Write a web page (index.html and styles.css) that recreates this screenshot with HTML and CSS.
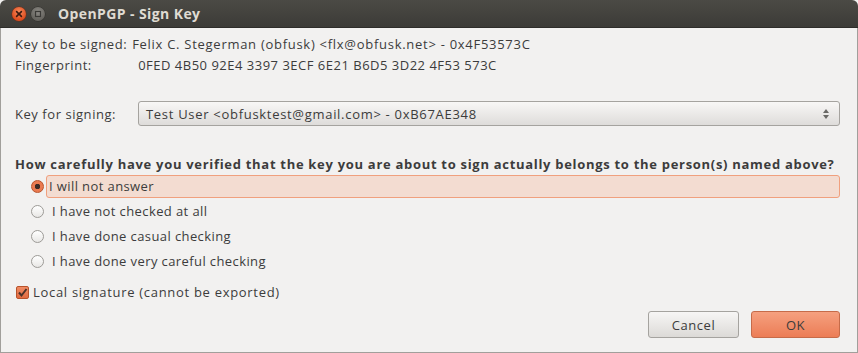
FILE: index.html
```html
<!DOCTYPE html>
<html>
<head>
<meta charset="utf-8">
<link rel="stylesheet" href="styles.css">
</head>
<body>
<div class="window">
  <div class="titlebar">
    <span class="wbtn close"><svg width="14" height="14" viewBox="0 0 14 14"><path d="M4.6 4.6 L9.4 9.4 M9.4 4.6 L4.6 9.4" stroke="#3b1a10" stroke-width="1.6" stroke-linecap="round"/></svg></span>
    <span class="wbtn max"><svg width="14" height="14" viewBox="0 0 14 14"><rect x="4.5" y="4.5" width="5" height="5" fill="none" stroke="#3a3936" stroke-width="1.2"/></svg></span>
    <span class="title">OpenPGP - Sign Key</span>
  </div>
  <div class="content">
    <div class="info">
      <span class="lbl">Key to be signed:</span><span class="val">Felix C. Stegerman (obfusk) &lt;flx@obfusk.net&gt; - 0x4F53573C</span>
      <span class="lbl">Fingerprint:</span><span class="val fp">0FED 4B50 92E4 3397 3ECF 6E21 B6D5 3D22 4F53 573C</span>
    </div>
    <div class="signrow">
      <span class="signlbl">Key for signing:</span>
      <div class="combo">
        <span class="combotext">Test User &lt;obfusktest@gmail.com&gt; - 0xB67AE348</span>
        <svg class="arrows" width="8" height="14" viewBox="0 0 8 14"><path d="M4 2 L7 6 L1 6 Z M4 12 L7 8 L1 8 Z" fill="#6a6966"/></svg>
      </div>
    </div>
    <div class="question">How carefully have you verified that the key you are about to sign actually belongs to the person(s) named above?</div>
    <div class="options">
      <div class="opt selected"><span class="radio on"></span><span class="optlbl">I will not answer</span></div>
      <div class="opt"><span class="radio"></span><span class="optlbl">I have not checked at all</span></div>
      <div class="opt"><span class="radio"></span><span class="optlbl">I have done casual checking</span></div>
      <div class="opt"><span class="radio"></span><span class="optlbl">I have done very careful checking</span></div>
    </div>
    <div class="check">
      <span class="cbox"><svg width="13" height="13" viewBox="0 0 13 13"><path d="M3 6.5 L5.5 9.5 L10.5 3" fill="none" stroke="#4b3229" stroke-width="2"/></svg></span>
      <span class="checklbl">Local signature (cannot be exported)</span>
    </div>
    <div class="buttons">
      <button class="btn cancel">Cancel</button>
      <button class="btn ok">OK</button>
    </div>
  </div>
</div>
</body>
</html>
```

FILE: styles.css
```css
html, body {
  margin: 0;
  padding: 0;
  background: #f2f1f0;
}
body {
  font-family: "Open Sans", "DejaVu Sans", sans-serif;
  font-size: 13px;
  letter-spacing: 0.55px;
  color: #3c3c3c;
}
.window {
  width: 858px;
  height: 353px;
  box-sizing: border-box;
  display: flex;
  flex-direction: column;
  background: #f2f1f0;
}
.titlebar {
  height: 28px;
  flex: none;
  display: flex;
  align-items: center;
  padding-left: 12px;
  background: linear-gradient(#4b4a45, #3c3b37);
  border-radius: 6px 6px 0 0;
  border-bottom: 1px solid #2e2d2a;
  box-sizing: border-box;
}
.wbtn {
  width: 14px;
  height: 14px;
  border-radius: 50%;
  display: flex;
  margin-right: 5px;
}
.wbtn.close {
  background: radial-gradient(circle at 50% 35%, #f68b5d, #df4c1e 70%);
  box-shadow: 0 0 0 0.5px #7a2a10;
}
.wbtn.max {
  background: radial-gradient(circle at 50% 35%, #8c8a85, #65635e 70%);
  box-shadow: 0 0 0 0.5px #2f2e2b;
}
.title {
  margin-left: 8px;
  color: #dfdbd2;
  font-weight: bold;
  font-size: 14px;
  letter-spacing: 0.4px;
}
.content {
  flex: 1;
  border: 1px solid #a19f9b;
  border-top: none;
  padding: 6px 17px 0 14px;
  display: flex;
  flex-direction: column;
}
.info {
  display: grid;
  grid-template-columns: auto 1fr;
  column-gap: 5px;
  line-height: 21px;
}
.val {
  letter-spacing: 0.72px;
}
.fp {
  padding-left: 6px;
  letter-spacing: 0.5px;
}
.signrow {
  margin-top: 25px;
  display: flex;
  align-items: center;
  height: 25px;
}
.signlbl {
  width: 123px;
  flex: none;
}
.combo {
  flex: 1;
  height: 25px;
  box-sizing: border-box;
  border: 1px solid #a5a39f;
  border-radius: 3px;
  background: linear-gradient(#f8f7f6, #dedcda);
  display: flex;
  align-items: center;
  padding: 0 7px 0 7px;
  justify-content: space-between;
}
.combotext {
  letter-spacing: 0.7px;
}
.arrows {
  margin-right: 2px;
}
.question {
  margin-top: 28px;
  font-weight: bold;
  line-height: 20px;
  letter-spacing: 0.7px;
  white-space: nowrap;
}
.options {
  display: flex;
  flex-direction: column;
}
.opt {
  height: 25px;
  display: flex;
  align-items: center;
  padding-left: 16px;
}
.radio {
  width: 13px;
  height: 13px;
  box-sizing: border-box;
  border-radius: 50%;
  border: 1px solid #9d9b97;
  background: linear-gradient(#ffffff, #e8e7e5);
  flex: none;
}
.radio.on {
  border-color: #b8532b;
  background: radial-gradient(circle, #3c2a24 0 2.5px, #ea7a50 3px);
}
.optlbl {
  margin-left: 4px;
  padding-left: 3px;
  line-height: 21px;
  flex: 1;
  border: 1px solid transparent;
  letter-spacing: 0.4px;
}
.opt.selected .optlbl {
  margin-left: 2px;
  padding-left: 2px;
  background: #f3dcd1;
  border-color: #f0a07e;
  border-radius: 3px;
  margin-right: 0;
}
.check {
  margin-top: 8px;
  height: 20px;
  display: flex;
  align-items: center;
  gap: 4px;
  padding-left: 1px;
}
.checklbl {
  letter-spacing: 0.7px;
}
.cbox {
  width: 13px;
  height: 13px;
  box-sizing: border-box;
  border: 1px solid #b8532b;
  border-radius: 2px;
  background: linear-gradient(#f08b64, #e16b40);
  display: flex;
  align-items: center;
  justify-content: center;
}
.cbox svg {
  flex: none;
}
.buttons {
  margin-top: 9px;
  display: flex;
  justify-content: flex-end;
  gap: 12px;
  padding-right: 0;
}
.btn {
  height: 27px;
  font-family: inherit;
  font-size: 13px;
  letter-spacing: 0.55px;
  color: #3c3c3c;
  border-radius: 3px;
  cursor: default;
}
.btn.cancel {
  width: 91px;
  border: 1px solid #a5a39f;
  background: linear-gradient(#f7f6f5, #dcdad7);
}
.btn.ok {
  width: 89px;
  border: 1px solid #c66b49;
  background: linear-gradient(#f5a07f, #ec7d56);
}
```
